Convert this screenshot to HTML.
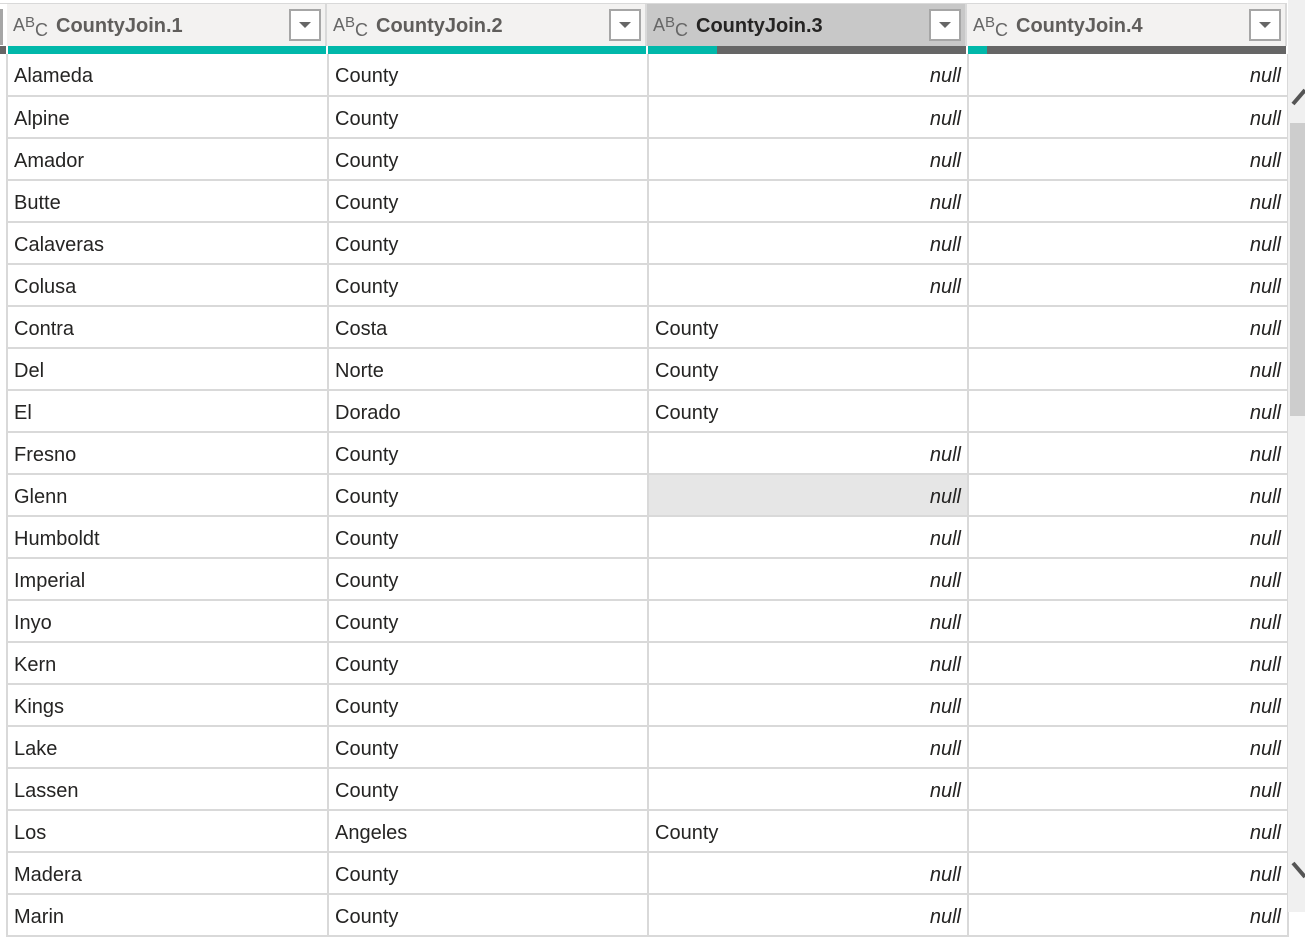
<!DOCTYPE html>
<html><head><meta charset="utf-8">
<style>
*{margin:0;padding:0;box-sizing:border-box}
body{width:1305px;height:912px;overflow:hidden;background:#fff;position:relative;font-family:"Segoe UI","Liberation Sans",sans-serif;color:#252423}
.hd{position:absolute;top:4px;height:42px;background:#f3f2f1;border-right:2px solid #d9d9d9}
.hd .ic{position:absolute;left:6px;top:11px;font-size:18px;color:#666;letter-spacing:0}
.hd .ic sup{font-size:15px;position:relative;top:-4px;vertical-align:baseline}
.hd .ic sub{font-size:18px;position:relative;top:5px;vertical-align:baseline}
.hd .t{position:absolute;left:49px;top:11px;font-size:20px;font-weight:bold;color:#605e5c}
.hd .dd{position:absolute;right:4px;top:5px;width:32px;height:32px;background:#fff;border:2px solid #a6a6a6}
.hd .dd:after{content:"";position:absolute;left:8px;top:11px;border-left:6px solid transparent;border-right:6px solid transparent;border-top:6px solid #666}
.bar{position:absolute;top:46px;height:8px;background:#666}
.bar i{position:absolute;left:0;top:0;height:8px;background:#01b8aa}
table{position:absolute;left:6px;top:54px;border-collapse:collapse;table-layout:fixed}
td{height:42px;border-left:2px solid #d9d9d9;border-right:2px solid #d9d9d9;border-bottom:2px solid #d9d9d9;font-size:20px;padding:4px 6px 0 6px;white-space:nowrap;overflow:hidden}
td.n{text-align:right;font-style:italic}
</style></head><body>
<div style="position:absolute;left:0;top:3px;width:1287px;height:1px;background:#d9d9d9"></div>
<div style="position:absolute;left:0;top:9px;width:3px;height:36px;background:#a6a6a6"></div>
<div style="position:absolute;left:0;top:46px;width:6px;height:8px;background:#666"></div>
<div class="hd" style="left:7px;width:320px"><span class="ic">A<sup>B</sup><sub>C</sub></span><span class="t">CountyJoin.1</span><span class="dd"></span></div>
<div class="hd" style="left:327px;width:320px"><span class="ic">A<sup>B</sup><sub>C</sub></span><span class="t">CountyJoin.2</span><span class="dd"></span></div>
<div class="hd" style="left:647px;width:320px;background:#c8c8c8"><span class="ic">A<sup>B</sup><sub>C</sub></span><span class="t" style="color:#252423">CountyJoin.3</span><span class="dd"></span></div>
<div class="hd" style="left:967px;width:320px"><span class="ic">A<sup>B</sup><sub>C</sub></span><span class="t">CountyJoin.4</span><span class="dd"></span></div>
<div class="bar" style="left:8px;width:318px"><i style="width:318px"></i></div>
<div class="bar" style="left:328px;width:318px"><i style="width:318px"></i></div>
<div class="bar" style="left:648px;width:318px"><i style="width:69px"></i></div>
<div class="bar" style="left:968px;width:318px"><i style="width:19px"></i></div>
<table>
<colgroup><col style="width:321px"><col style="width:320px"><col style="width:320px"><col style="width:320px"></colgroup>
<tr><td>Alameda</td><td>County</td><td class="n">null</td><td class="n">null</td></tr>
<tr><td>Alpine</td><td>County</td><td class="n">null</td><td class="n">null</td></tr>
<tr><td>Amador</td><td>County</td><td class="n">null</td><td class="n">null</td></tr>
<tr><td>Butte</td><td>County</td><td class="n">null</td><td class="n">null</td></tr>
<tr><td>Calaveras</td><td>County</td><td class="n">null</td><td class="n">null</td></tr>
<tr><td>Colusa</td><td>County</td><td class="n">null</td><td class="n">null</td></tr>
<tr><td>Contra</td><td>Costa</td><td>County</td><td class="n">null</td></tr>
<tr><td>Del</td><td>Norte</td><td>County</td><td class="n">null</td></tr>
<tr><td>El</td><td>Dorado</td><td>County</td><td class="n">null</td></tr>
<tr><td>Fresno</td><td>County</td><td class="n">null</td><td class="n">null</td></tr>
<tr><td>Glenn</td><td>County</td><td class="n" style="background:#e6e6e6">null</td><td class="n">null</td></tr>
<tr><td>Humboldt</td><td>County</td><td class="n">null</td><td class="n">null</td></tr>
<tr><td>Imperial</td><td>County</td><td class="n">null</td><td class="n">null</td></tr>
<tr><td>Inyo</td><td>County</td><td class="n">null</td><td class="n">null</td></tr>
<tr><td>Kern</td><td>County</td><td class="n">null</td><td class="n">null</td></tr>
<tr><td>Kings</td><td>County</td><td class="n">null</td><td class="n">null</td></tr>
<tr><td>Lake</td><td>County</td><td class="n">null</td><td class="n">null</td></tr>
<tr><td>Lassen</td><td>County</td><td class="n">null</td><td class="n">null</td></tr>
<tr><td>Los</td><td>Angeles</td><td>County</td><td class="n">null</td></tr>
<tr><td>Madera</td><td>County</td><td class="n">null</td><td class="n">null</td></tr>
<tr><td>Marin</td><td>County</td><td class="n">null</td><td class="n">null</td></tr>
</table>
<div style="position:absolute;left:1288px;top:0;width:17px;height:912px;background:#f0f0f0"></div>
<div style="position:absolute;left:1290px;top:123px;width:15px;height:293px;background:#cdcdcd"></div>
<svg style="position:absolute;left:1288px;top:80px" width="17" height="32"><path d="M5 24 L17 10" stroke="#555" stroke-width="4" fill="none"/></svg>
<svg style="position:absolute;left:1288px;top:855px" width="17" height="32"><path d="M5 8 L17 22" stroke="#555" stroke-width="4" fill="none"/></svg>
</body></html>
